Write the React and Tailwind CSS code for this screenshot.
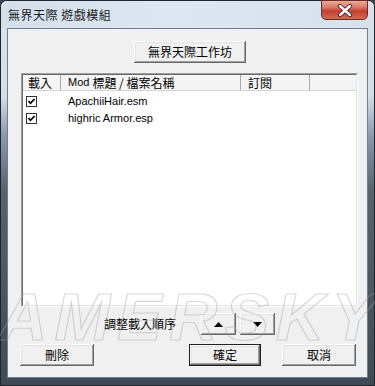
import React from "react";

const btn3d =
  "bg-[#f0f0f0] shadow-[inset_-1px_-1px_#696969,inset_1px_1px_#ffffff,inset_-2px_-2px_#a0a0a0,inset_2px_2px_#e3e3e3] flex items-center justify-center text-[12px] text-black";

function Check() {
  return (
    <svg width="11" height="11" viewBox="0 0 11 11" className="shrink-0">
      <rect x="0.5" y="0.5" width="10" height="10" fill="#fff" stroke="#333" />
      <path d="M2.5 5.2 L4.5 7.3 L8.6 3" fill="none" stroke="#000" strokeWidth="1.8" />
    </svg>
  );
}

function Row({ name }) {
  return (
    <div className="h-[17px] flex items-center">
      <div className="w-[38px] pl-[3px] flex items-center">
        <Check />
      </div>
      <span className="ml-[7px] text-[11px] text-black font-['Liberation_Sans',sans-serif]">{name}</span>
    </div>
  );
}

export default function App() {
  return (
    <div className="relative w-[375px] h-[386px] overflow-hidden bg-[#3a4450] font-['Noto_Sans_CJK_TC','Noto_Sans_CJK_SC',sans-serif]">
      <div className="w-[375px] h-[386px] rounded-t-[7px] border border-[#1f252c] bg-[linear-gradient(180deg,#d8e3ee_0px,#d2deea_95px,#8a99aa_135px,#56636f_190px,#3f4954_386px)] flex flex-col">
        {/* title bar */}
        <div className="relative h-[27px] flex items-center pl-[7px] bg-[linear-gradient(90deg,#d3dfeb_0%,#dde7f1_45%,#d6e1ec_100%)] rounded-t-[6px]">
          <span className="text-[12px] text-[#1b1b1b] leading-none tracking-[0.5px]">無界天際 遊戲模組</span>
          <div className="absolute top-[-1px] right-[6px] w-[47px] h-[20px] rounded-b-[5px] border border-[#6a2d28] bg-[linear-gradient(180deg,#e9ab99_0%,#d97a67_35%,#c2402f_55%,#d26a52_100%)] flex items-center justify-center">
            <svg width="16" height="13" viewBox="0 0 16 13">
              <path d="M3 2 L13 11 M13 2 L3 11" stroke="#4a2020" strokeWidth="4.2" strokeLinecap="round" />
              <path d="M3 2 L13 11 M13 2 L3 11" stroke="#ffffff" strokeWidth="2.4" strokeLinecap="round" />
            </svg>
          </div>
        </div>
        {/* client */}
        <div className="ml-[6px] w-[361px] h-[350px] border border-[#6f7d8c] bg-[#f0f0f0] flex flex-col">
          <div className="pt-[12px] pl-[126px]">
            <div className={btn3d + " w-[112px] h-[22px]"}>無界天際工作坊</div>
          </div>
          <div className="mt-[10px] ml-[13px] w-[337px] h-[234px] border border-t-[#a0a0a0] border-l-[#a0a0a0] border-r-white border-b-white">
            <div className="w-full h-full border border-t-[#696969] border-l-[#696969] border-r-[#e3e3e3] border-b-[#e3e3e3] bg-white flex flex-col">
              <div className="h-[16px] flex bg-[#f4f4f4] border-b border-[#d5d5d5] text-[12px] text-black leading-none">
                <div className="w-[38px] pl-[5px] flex items-center border-r border-[#a8a8a8]">載入</div>
                <div className="w-[180px] pl-[7px] flex items-center border-r border-[#a8a8a8]">
                  <span className="font-['Liberation_Sans',sans-serif] text-[11px] mr-[3px]">Mod</span>
                  <span>標題 / 檔案名稱</span>
                </div>
                <div className="w-[69px] pl-[7px] flex items-center border-r border-[#a8a8a8]">訂閱</div>
                <div className="flex-1" />
              </div>
              <div className="pt-[2px] flex flex-col">
                <Row name="ApachiiHair.esm" />
                <Row name="highric Armor.esp" />
              </div>
            </div>
          </div>
          <div className="mt-[6px] h-[22px] flex items-center">
            <span className="ml-[96px] w-[97px] text-[12px] text-black">調整載入順序</span>
            <div className={btn3d + " w-[35px] h-[22px]"}>
              <svg width="9" height="5" viewBox="0 0 9 5"><polygon points="0,5 9,5 4.5,0" fill="#000" /></svg>
            </div>
            <div className={btn3d + " ml-[4px] w-[35px] h-[22px]"}>
              <svg width="9" height="5" viewBox="0 0 9 5"><polygon points="0,0 9,0 4.5,5" fill="#000" /></svg>
            </div>
          </div>
          <div className="mt-[9px] h-[22px] flex items-center">
            <div className={btn3d + " ml-[12px] w-[74px] h-[22px]"}>刪除</div>
            <div className="ml-[95px] w-[72px] h-[22px] border border-[#202020] flex">
              <div className={btn3d + " flex-1"}>確定</div>
            </div>
            <div className={btn3d + " ml-[21px] w-[74px] h-[22px]"}>取消</div>
          </div>
        </div>
      </div>
      {/* watermark */}
      <div className="pointer-events-none absolute left-[-60px] top-[283px] text-[67px] leading-none font-bold italic tracking-[7px] font-['Liberation_Sans',sans-serif] text-transparent [-webkit-text-stroke:1.2px_rgba(160,160,160,0.4)] whitespace-nowrap">
        GAMERSKY
      </div>
    </div>
  );
}
